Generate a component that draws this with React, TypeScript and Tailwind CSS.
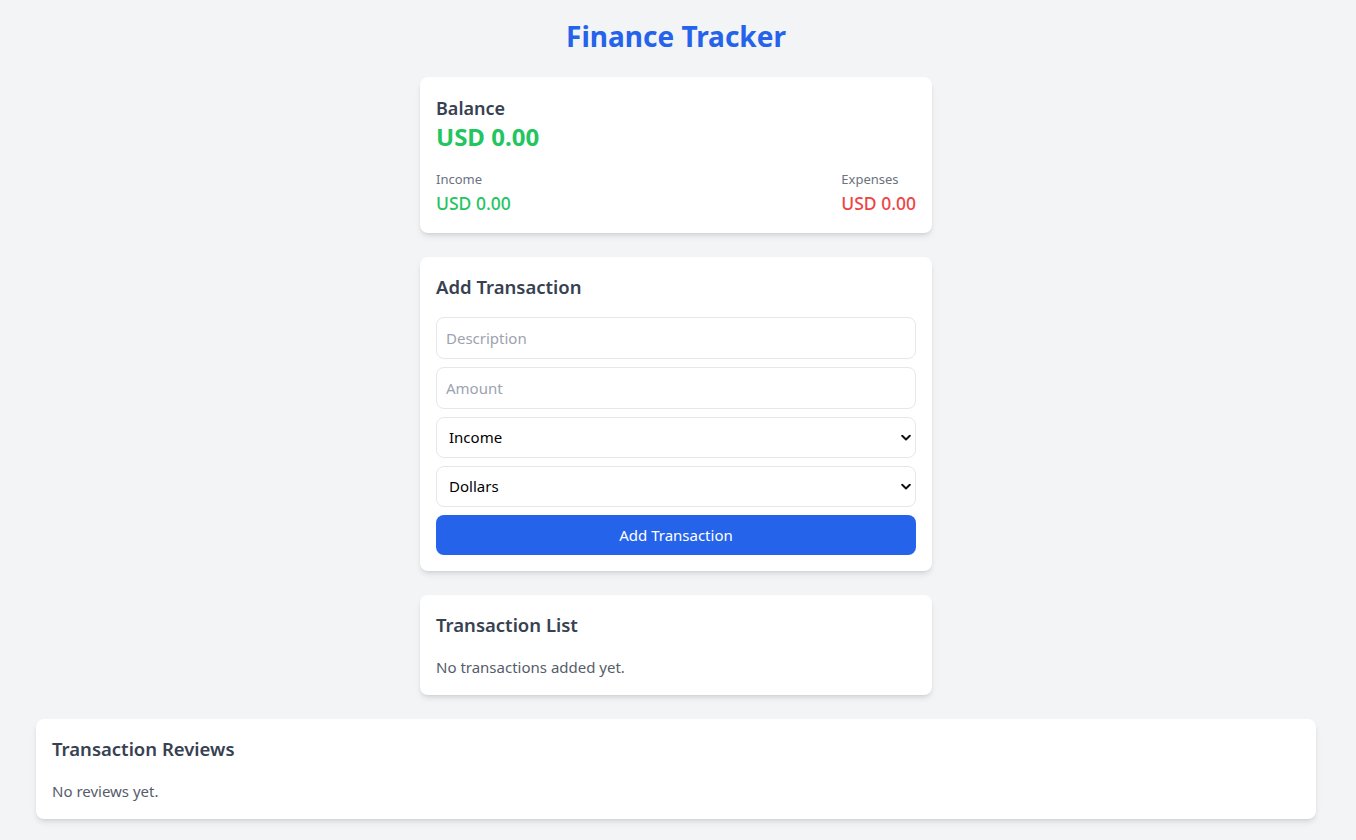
import React from "react";

export default function App() {
  return (
    <div className="min-h-screen bg-[#f3f4f6] pt-[18px] pb-[21px] font-['Noto_Sans','Open_Sans',sans-serif]">
      <h1 className="text-center text-[28px] leading-[36px] font-bold text-[#2563eb] mb-[23px] ml-[-4px]">Finance Tracker</h1>
      <div className="flex flex-col items-center gap-6 mr-[4px]">
        <div className="w-[512px] bg-white rounded-lg shadow-md p-4">
          <div className="text-[18px] leading-[28px] font-semibold text-[#374151] pt-[1px]">Balance</div>
          <div className="text-[24px] leading-[32px] font-bold text-[#22c55e] mt-[-1px]">USD 0.00</div>
          <div className="flex justify-between mt-4">
            <div>
              <div className="text-[13px] leading-[20px] text-[#6b7280]">Income</div>
              <div className="text-[17.5px] leading-[28px] font-medium text-[#22c55e]">USD 0.00</div>
            </div>
            <div>
              <div className="text-[13px] leading-[20px] text-[#6b7280]">Expenses</div>
              <div className="text-[17.5px] leading-[28px] font-medium text-[#ef4444]">USD 0.00</div>
            </div>
          </div>
        </div>

        <div className="w-[512px] bg-white rounded-lg shadow-md p-4">
          <div className="text-[18.5px] leading-[28px] font-semibold text-[#374151] mb-4">Add Transaction</div>
          <input
            placeholder="Description"
            className="block w-full h-[42px] border border-[#e5e7eb] rounded-lg px-[9px] text-[15px] placeholder-[#9ca3af] mb-2 outline-none"
          />
          <input
            placeholder="Amount"
            className="block w-full h-[42px] border border-[#e5e7eb] rounded-lg px-[9px] text-[15px] placeholder-[#9ca3af] mb-2 outline-none"
          />
          <div className="relative mb-2">
            <select className="block w-full h-[41px] border border-[#e5e7eb] rounded-lg pl-[12px] text-[15px] text-black appearance-none bg-white outline-none">
              <option>Income</option>
            </select>
            <Chevron />
          </div>
          <div className="relative mb-2">
            <select className="block w-full h-[41px] border border-[#e5e7eb] rounded-lg pl-[12px] text-[15px] text-black appearance-none bg-white outline-none">
              <option>Dollars</option>
            </select>
            <Chevron />
          </div>
          <button className="w-full h-[40px] bg-[#2563eb] text-white rounded-lg text-[15px]">Add Transaction</button>
        </div>

        <div className="w-[512px] bg-white rounded-lg shadow-md p-4">
          <div className="text-[18.5px] leading-[28px] font-semibold text-[#374151] mb-4">Transaction List</div>
          <div className="text-[15px] leading-[24px] text-[#555d6b]">No transactions added yet.</div>
        </div>
      </div>
      <div className="mt-6 ml-[36px] w-[1280px] bg-white rounded-lg shadow-md p-4">
        <div className="text-[18.5px] leading-[28px] font-semibold text-[#374151] mb-4">Transaction Reviews</div>
        <div className="text-[15px] leading-[24px] text-[#555d6b]">No reviews yet.</div>
      </div>
    </div>
  );
}

function Chevron() {
  return (
    <svg
      className="absolute right-[5px] top-1/2 -translate-y-1/2 pointer-events-none"
      width="10"
      height="7"
      viewBox="0 0 10 7"
      fill="none"
    >
      <path d="M1.2 1.3 L5 5 L8.8 1.3" stroke="#111" strokeWidth="2" strokeLinecap="round" strokeLinejoin="round" />
    </svg>
  );
}
